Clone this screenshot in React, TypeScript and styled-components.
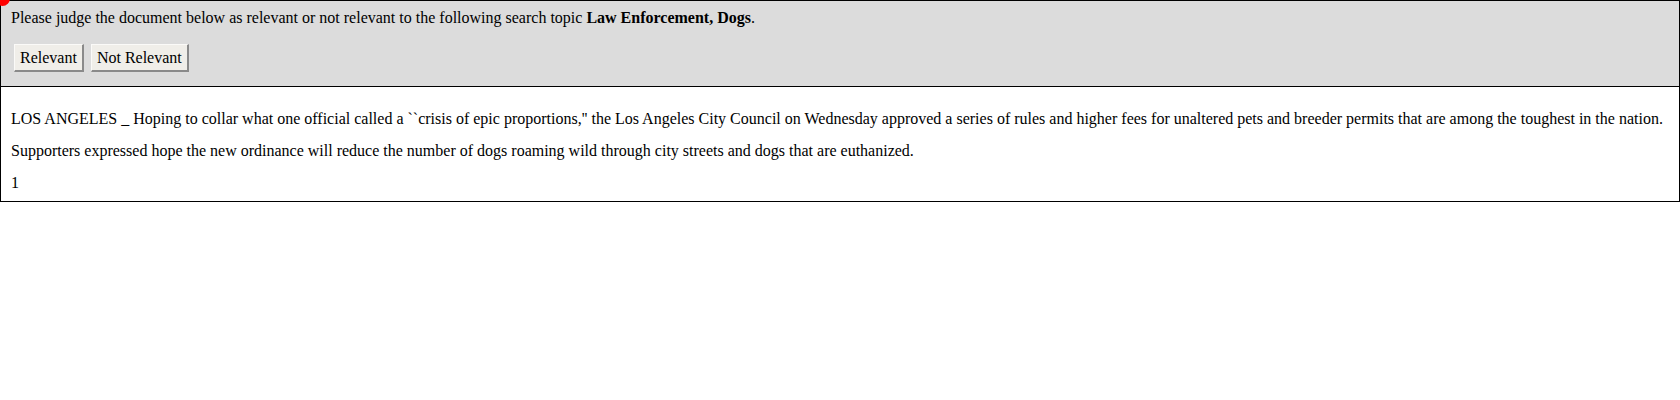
import styled, { createGlobalStyle } from "styled-components";

const GlobalStyle = createGlobalStyle`
  body {
    margin: 0;
    font-family: "Liberation Serif", "Times New Roman", serif;
    font-size: 16px;
    color: #000;
    background: #fff;
  }
`;

const Page = styled.div`
  position: relative;
`;

const Dot = styled.span`
  position: absolute;
  left: -5px;
  top: -9px;
  width: 15px;
  height: 15px;
  border-radius: 50%;
  background: #ff0000;
`;

const Header = styled.div`
  background: #dcdcdc;
  border: 1px solid #000;
  padding: 8px 10px 14px;
`;

const Prompt = styled.div`
  line-height: 18px;
`;

const ButtonRow = styled.div`
  display: flex;
  gap: 7px;
  margin: 17px 0 0 3px;
`;

const JudgeButton = styled.button`
  font-family: "Liberation Serif", "Times New Roman", serif;
  font-size: 16px;
  line-height: 18px;
  height: 28px;
  padding: 0 5px;
  background: #f0eee9;
  color: #000;
  border-style: solid;
  border-width: 1px 2px 2px 1px;
  border-color: #fbfaf8 #8a8a8a #8a8a8a #fbfaf8;
  cursor: pointer;
`;

const Document = styled.div`
  border: 1px solid #000;
  border-top: none;
  padding: 23px 10px 9px;
  display: flex;
  flex-direction: column;
  gap: 14px;
`;

const Para = styled.p`
  margin: 0;
  line-height: 18px;
  white-space: nowrap;
`;

const paragraphs = [
  "LOS ANGELES _ Hoping to collar what one official called a ``crisis of epic proportions,'' the Los Angeles City Council on Wednesday approved a series of rules and higher fees for unaltered pets and breeder permits that are among the toughest in the nation.",
  "Supporters expressed hope the new ordinance will reduce the number of dogs roaming wild through city streets and dogs that are euthanized.",
  "1",
];

export default function App() {
  return (
    <Page>
      <GlobalStyle />
      <Header>
        <Prompt>
          Please judge the document below as relevant or not relevant to the
          following search topic <b>Law Enforcement, Dogs</b>.
        </Prompt>
        <ButtonRow>
          <JudgeButton>Relevant</JudgeButton>
          <JudgeButton>Not Relevant</JudgeButton>
        </ButtonRow>
      </Header>
      <Document>
        {paragraphs.map((text, i) => (
          <Para key={i}>{text}</Para>
        ))}
      </Document>
      <Dot />
    </Page>
  );
}
